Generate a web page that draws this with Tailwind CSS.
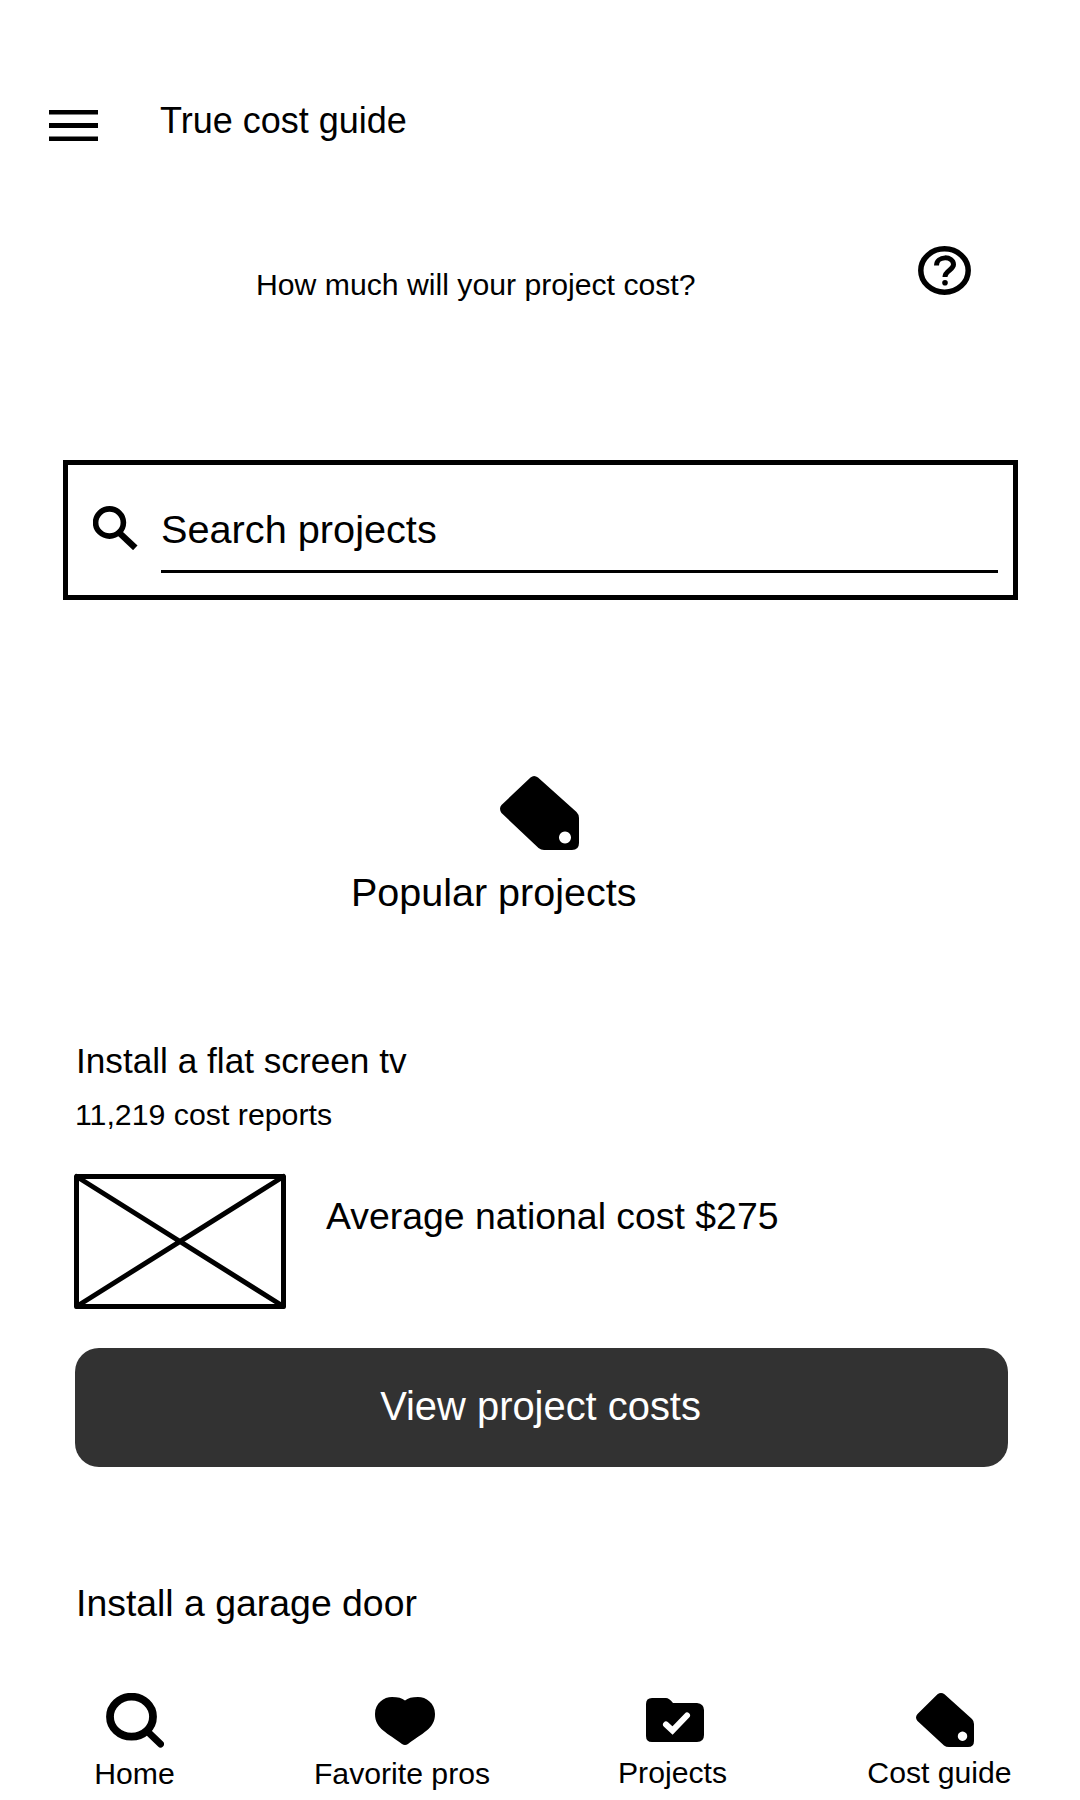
<!DOCTYPE html>
<html lang="en">
<head>
<meta charset="utf-8">
<title>True cost guide</title>
<script src="https://cdn.jsdelivr.net/npm/@tailwindcss/browser@4"></script>
</head>
<body class="bg-white text-black">
<div class="flex h-[1800px] w-[1080px] flex-col overflow-hidden bg-white font-['Liberation_Sans',Arial,sans-serif] leading-[40px] whitespace-nowrap">

  <header class="flex h-[180px] shrink-0 items-start pl-[49px]">
    <svg class="mt-[110px] h-[31px] w-[49px] shrink-0" viewBox="0 0 49 31"><path d="M0 0h49v4.500H0zM0 13h49v5H0zM0 26.500h49v4.500H0z"/></svg>
    <h1 class="mt-[101px] ml-[62px] text-[36px]">True cost guide</h1>
  </header>

  <section class="flex h-[280px] shrink-0 items-start justify-between pr-[109px] pl-[256px]">
    <p class="mt-[85px] text-[30.2px]">How much will your project cost?</p>
    <svg class="mt-[66px] h-[49px] w-[53px]" viewBox="0 0 53 49" fill="none" stroke="#000">
      <ellipse cx="26.500" cy="24.500" rx="23.700" ry="21.700" stroke-width="5.500"/>
      <path d="M18.500 19.500C18.500 9.500 35.500 9.500 35.500 18.500C35.500 24 27 24.500 27 31" stroke-width="5"/>
      <circle cx="27" cy="36.700" r="2.800" fill="#000" stroke="none"/>
    </svg>
  </section>

  <section class="ml-[63px] flex h-[140px] w-[955px] shrink-0 items-start border-[5px] border-black pr-[15px] pl-[25px]">
    <svg class="mt-[41px] h-[44px] w-[45px] shrink-0" viewBox="0 0 45 44" fill="none" stroke="#000">
      <ellipse cx="16.500" cy="16.500" rx="13.900" ry="13.600" stroke-width="5.600"/>
      <path d="M27 27.500L42.300 41.800" stroke-width="6.500"/>
    </svg>
    <div class="ml-[23px] h-[108px] flex-1 border-b-[3px] border-black pt-[44px] text-[39.7px]">Search projects</div>
  </section>

  <section class="flex h-[440px] shrink-0 flex-col pt-[176px]">
    <svg class="ml-[500px] h-[74px] w-[79px] shrink-0" viewBox="0 0 79 74"><path fill-rule="evenodd" d="M30.500 1.500Q34 -1.500 38 1.500L76.500 36Q79 38.500 79 42V67Q79 74 72 74H44Q41 74 38.500 72L1.500 37Q-1.500 32.500 1.500 29ZM65 55.500a6 6 0 1 0 0.010 0Z"/></svg>
    <h2 class="mt-[22px] ml-[351px] text-[39.5px]">Popular projects</h2>
  </section>

  <section class="flex h-[530px] shrink-0 flex-col pl-[75px]">
    <h3 class="mt-[1px] ml-[1px] text-[35.2px]">Install a flat screen tv</h3>
    <p class="mt-[14px] text-[30.3px]">11,219 cost reports</p>
    <div class="mt-[38px] -ml-[1px] flex items-start">
      <svg class="h-[136px] w-[212px] shrink-0" viewBox="0 0 212 136" fill="none" stroke="#000" stroke-width="5"><path d="M2.500 3.500H209.500V133.500H2.500ZM2.500 3.500L209.500 133.500M209.500 3.500L2.500 133.500" stroke-linejoin="round" stroke-linecap="round"/></svg>
      <p class="mt-[23px] ml-[40px] text-[37.4px]">Average national cost $275</p>
    </div>
    <button class="mt-[39px] h-[119px] w-[933px] shrink-0 rounded-[24px] bg-[#323232] pr-[2px] pb-[4px] text-[39.9px] text-white">View project costs</button>
  </section>

  <section class="h-[123px] shrink-0 pt-[13px] pl-[76px]">
    <h3 class="text-[37.4px]">Install a garage door</h3>
  </section>

  <nav class="grid h-[107px] shrink-0 grid-cols-4 text-center text-[30.2px]">
    <a class="flex flex-col items-center">
      <svg class="h-[60px] w-[58px]" viewBox="0 0 58 60" fill="none" stroke="#000"><ellipse cx="25.500" cy="23.700" rx="21.500" ry="20" stroke-width="7.800"/><path d="M42 39L54.500 51" stroke-width="7" stroke-linecap="round"/></svg>
      <span class="mt-[1px] mr-[1px]">Home</span>
    </a>
    <a class="flex flex-col items-center">
      <svg class="h-[60px] w-[60px]" viewBox="0 0 60 60"><path d="M0 21C0 10 9 4 17 4C23 4 27 5 30 7.500C33 5 37 4 43 4C51 4 60 10 60 21C60 36 47 40 33 51Q30 53 27 51C13 40 0 36 0 21Z"/></svg>
      <span class="mt-[1px] mr-[6px]">Favorite pros</span>
    </a>
    <a class="flex flex-col items-center">
      <svg class="h-[60px] w-[58px]" viewBox="0 0 58 60"><path d="M6 5H20Q23 5 27 10H51Q58 11 58 17V42Q58 49 51 49H6Q0 49 0 43V11Q0 5 6 5Z"/><path d="M20 31.500L26.500 37.500L41 22.500" fill="none" stroke="#fff" stroke-width="6" stroke-linecap="round"/></svg>
      <span class="mr-[5px]">Projects</span>
    </a>
    <a class="flex flex-col items-center">
      <svg class="h-[60px] w-[58px]" viewBox="0 0 58 60"><path fill-rule="evenodd" d="M21.500 1.200Q25 -1 28.500 1.200L56 26Q58 28 58 31V48Q58 54 52 54H33Q30 54 28 52.500L1.500 28Q-1.500 24.500 1.500 21ZM46.500 38.500a4.700 4.700 0 1 0 0.010 0Z"/></svg>
      <span class="mr-[11px]">Cost guide</span>
    </a>
  </nav>
</div>
</body>
</html>
